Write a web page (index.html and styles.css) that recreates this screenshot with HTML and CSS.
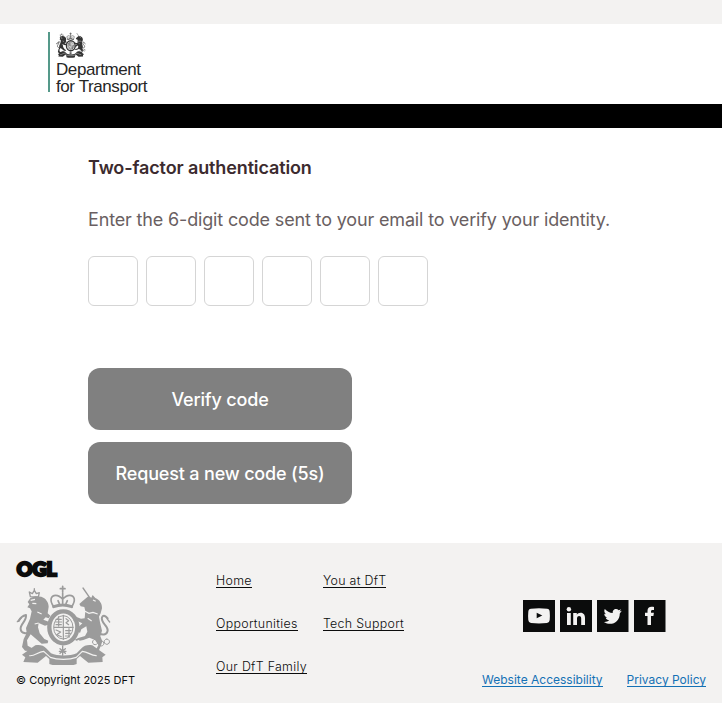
FILE: index.html
```html
<!DOCTYPE html>
<html lang="en">
<head>
<meta charset="utf-8">
<title>Two-factor authentication</title>
<link rel="stylesheet" href="styles.css">
</head>
<body>
<svg class="defs" aria-hidden="true">
  <symbol id="crest" viewBox="48 135 288 240">
    <g fill="none" stroke="currentColor" stroke-linecap="round" stroke-linejoin="round">
      <!-- central crown -->
      <path stroke-width="5" d="M188 139v18M181 146h14M161 200c-14-20-8-34 6-34 10 0 16 6 21 12 5-6 11-12 21-12 14 0 20 14 6 34M188 160v30M174 182l4 9M202 182l-4 9"/>
      <path stroke-width="9" d="M161 200q27-10 54 0"/>
      <!-- garter and shield -->
      <ellipse cx="190" cy="262" rx="42" ry="48" stroke-width="13"/>
      <path stroke-width="3.5" d="M190 226v72M163 262h54M168 238h16M167 246h18M168 254h16M198 236l8 6-8 6 8 6M168 270l14 6-12 8 14 6M197 272h16M197 280h14M196 288h12M176 230v28M207 266v26"/>
      <ellipse cx="190" cy="262" rx="29" ry="35" stroke-width="3"/>
      <path stroke-width="4" d="M188 318v28M178 334h20M180 326l16 14M196 326l-16 14"/>
      <!-- tails -->
      <path stroke-width="6" d="M88 274c-8 10-24 6-26-6-3-15 18-24 16-42M56 243c6-12 12-16 22-18M298 280c12 8 24 2 25-9 1-15-22-22-17-39 4-9 12-3 17 3"/>
      <path stroke-width="4" d="M52 245l12-12M329 246l-8-10"/>
      <!-- lion crown and horn -->
      <path stroke-width="4" d="M91 170l-3-14 9 5 6-10 6 10 9-3-3 13zM103 146v5M249 144l20 29"/>
      <path stroke-width="3" d="M285 298a8 8 0 1 0 1 0M303 302a8 8 0 1 0 1 0M320 297a8 8 0 1 0 1 0"/>
    </g>
    <g fill="currentColor">
      <!-- lion -->
      <path d="M91 174l15-5 18 1c13 4 22 17 22 30l-3 20 8 7-5 8-9-3-7 7 16 6 3 8-14 4-19-8-2 13 5 18 14 17 12 5-2 8-18 1-20-17-13-11-11 18 2 16 18 10-3 7-23-2-9-11 5-24 9-18-2-15 12-28 5-22-5-9-8-3 6-9-5-7z"/>
      <!-- unicorn -->
      <path d="M265 169l9 4 4-8 8 9c13 5 21 18 20 31l-4 15-5 10 3 17 6 25-5 17 6 15-4 12-7 17-10 5 2-9 7-14-10-15-17-7-18 7-18 4-8-5 11-5 20-6 7-13-3-16-15 9-4 11-8-6 4-13 11-10-17-8-9 2-2-9 9-5 15 6 11-1 2-22-3-12-11-2-4-7 9-8z"/>
      <!-- ribbon -->
      <path d="M66 344l40-28c14-2 24 0 34 10l13 14c20 9 57 9 77 0l13-14c10-10 20-12 34-10l40 28-10 8 1 14-43 2-25-20-10 9v15c-18 8-63 8-82 0v-15l-10-9-25 20-43-2 6-14z"/>
    </g>
    <path class="crest-cut" fill="none" stroke-width="3.5" d="M92 181l13-3M97 190l12 1M112 216l13 6M104 252l12-3M279 180l8 4M255 214l12 6 12-3 14 5M263 235l12 8M88 347c18 2 24-12 43-13l20 18c21 8 57 8 78 0l18-18c19 1 25 14 43 13M145 302l22 9M219 309l19-8"/>
  </symbol>
</svg>
<header>
  <div class="topline"></div>
  <div class="brand-row">
    <div class="brand">
      <svg class="brand-crest"><use href="#crest"/></svg>
      <svg class="brand-name" viewBox="0 0 94 38"><text x="0" y="15.500" textLength="85">Department</text><text x="0" y="33" textLength="91.500">for Transport</text></svg>
    </div>
  </div>
  <div class="band"></div>
</header>
<main>
  <h1>Two-factor authentication</h1>
  <p>Enter the 6-digit code sent to your email to verify your identity.</p>
  <form>
    <div class="code">
      <input aria-label="Digit 1"><input aria-label="Digit 2"><input aria-label="Digit 3"><input aria-label="Digit 4"><input aria-label="Digit 5"><input aria-label="Digit 6">
    </div>
    <button type="button">Verify code</button>
    <button type="button">Request a new code (5s)</button>
  </form>
</main>
<footer>
  <div class="legal">
    <svg class="ogl" viewBox="0 0 41 17"><text x="0.700" y="15.500" textLength="40" lengthAdjust="spacingAndGlyphs">OGL</text></svg>
    <svg class="footer-crest"><use href="#crest"/></svg>
    <span class="copyright">© Copyright 2025 DFT</span>
  </div>
  <nav>
    <div class="nav-col"><a>Home</a><a>Opportunities</a><a>Our DfT Family</a></div>
    <div class="nav-col"><a>You at DfT</a><a>Tech Support</a></div>
  </nav>
  <div class="side">
    <div class="social">
      <svg viewBox="0 0 32 32"><rect class="tile" width="32" height="32"/><path d="M8 8.700q8-.8 16 0 2.500.2 2.700 3 .4 4 0 8.300-.2 2.800-2.700 3-8 .8-16 0-2.500-.2-2.700-3-.4-4.300 0-8.300.2-2.800 2.700-3z"/><path class="tile" d="M13.700 12.800v5.400l5.600-2.700z"/></svg>
      <svg viewBox="0 0 32 32"><rect class="tile" width="32" height="32"/><circle cx="8.900" cy="9.300" r="2.200"/><path d="M7 13h3.800v12H7zM13.200 13h3.600v1.700c2-3 8.200-2.800 8.200 3V25h-3.800v-6.500c0-3.300-4.200-3.200-4.200 0V25h-3.800z"/></svg>
      <svg viewBox="0 0 32 32"><rect class="tile" width="31.500" height="32"/><path d="M24.800 10.700l-2.300.7 1.700-2.200-2.500 1c-2.700-2.600-6.700-.4-5.900 2.900-3.200-.2-6-1.600-8-4-.9 1.700-.6 3.900 1.200 5.100l-1.700-.5c0 2 1.200 3.400 3 3.900l-1.600.1c.5 1.500 1.800 2.500 3.500 2.600-1.500 1.200-3.300 1.800-5.400 1.600 7.500 4.700 16 .2 16-8.500z"/></svg>
      <svg viewBox="0 0 32 32"><rect class="tile" width="31.500" height="32"/><path d="M13.500 25v-9H11v-3.200h2.500v-2c0-2.900 1.600-4 4-4 1.300 0 2.500.2 2.500.2V10h-1.400c-1.200 0-1.600.6-1.600 1.500v1.300h2.900l-.5 3.200H17v9z"/></svg>
    </div>
    <div class="policies"><a>Website Accessibility</a><a>Privacy Policy</a></div>
  </div>
</footer>
</body>
</html>
```
FILE: styles.css
```css
* { box-sizing: border-box; }
body { margin: 0; font-family: Inter, sans-serif; background: #fff; }
.defs { position: absolute; width: 0; height: 0; }
.topline { height: 24px; background: #f3f2f1; }
.brand-row { height: 80px; padding: 8px 0 0 48px; }
.brand { display: flex; flex-direction: column; width: 110px; height: 60px; padding-left: 6px; border-left: 2px solid #55998a; color: #262626; }
.brand-crest { width: 30px; height: 26px; flex: none; color: #333; --cut: #fff; }
.brand-name { flex: none; width: 94px; height: 38px; margin-top: 1px; overflow: visible; }
.brand-name text { font: 17px "Liberation Sans", sans-serif; fill: #262626; }
.band { height: 24px; background: #000; }
main { height: 415px; padding: 28px 88px 0; }
h1 { margin: 0; font-size: 18px; line-height: 24px; font-weight: 600; color: #3c2b2f; letter-spacing: -0.12px; }
p { margin: 28px 0 0; font-size: 18px; line-height: 24px; color: #6a5f62; letter-spacing: -0.157px; white-space: nowrap; }
.code { display: flex; gap: 8px; margin: 24px 0 62px; }
input { width: 50px; height: 50px; border: 1px solid #d5d5d5; border-radius: 6px; padding: 0; background: #fff; }
button { display: block; width: 264px; height: 62px; margin: 0 0 12px; padding: 2px 0 0; border: 0; border-radius: 12px; background: #808080; color: #fff; font: 500 18px/24px Inter, sans-serif; letter-spacing: -0.17px; }
footer { display: flex; height: 160px; padding: 17px 16px 0; background: #f3f2f1; }
.legal { display: flex; flex-direction: column; width: 200px; }
.ogl { width: 41px; height: 17px; overflow: visible; }
.ogl text { font: 900 19px Lato, sans-serif; fill: #0b0c0c; stroke: #0b0c0c; stroke-width: 2.4px; }
.footer-crest { width: 96px; height: 80px; margin-top: 8px; color: #9b9b9b; --cut: #f3f2f1; }
.crest-cut { stroke: var(--cut); }
.copyright { margin-top: 8px; font-size: 11px; line-height: 14px; color: #0b0c0c; }
nav { display: flex; gap: 16px; padding-top: 13px; }
.nav-col { display: flex; flex-direction: column; align-items: flex-start; gap: 28px; }
.nav-col a { padding-top: 2px; font-size: 12.4px; font-weight: 300; line-height: 12px; letter-spacing: 0.31px; color: #0b0c0c; border-bottom: 1px solid #0b0c0c; white-space: nowrap; }
.side { display: flex; flex-direction: column; align-items: flex-end; margin-left: auto; padding-top: 40px; }
.social { display: flex; gap: 5px; margin-right: 40px; fill: #f3f2f1; }
.social svg { width: 32px; height: 32px; }
.tile { fill: #0b0c0c; }
.policies { display: flex; gap: 24px; margin-top: 41px; }
.policies a { font-size: 12px; line-height: 13px; color: #1471b5; border-bottom: 1px solid #1471b5; white-space: nowrap; }
```
